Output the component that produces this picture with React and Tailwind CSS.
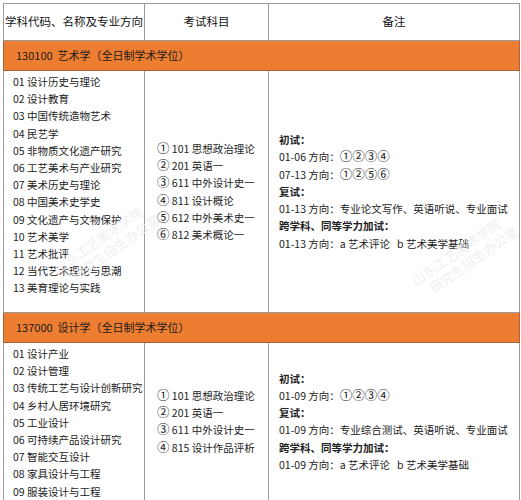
import React from "react";

const font = { fontFamily: '"Noto Sans CJK SC", "Liberation Sans", sans-serif' };

const sections = [
  {
    title: "130100\u00a0 艺术学（全日制学术学位）",
    h: "h-[242px]",
    majors: [
      "01 设计历史与理论",
      "02 设计教育",
      "03 中国传统造物艺术",
      "04 民艺学",
      "05 非物质文化遗产研究",
      "06 工艺美术与产业研究",
      "07 美术历史与理论",
      "08 中国美术史学史",
      "09 文化遗产与文物保护",
      "10 艺术美学",
      "11 艺术批评",
      "12 当代艺术理论与思潮",
      "13 美育理论与实践",
    ],
    exams: [
      "① 101 思想政治理论",
      "② 201 英语一",
      "③ 611 中外设计史一",
      "④ 811 设计概论",
      "⑤ 612 中外美术史一",
      "⑥ 812 美术概论一",
    ],
    notes: [
      { b: true, t: "初试：" },
      { t: "01-06 方向：①②③④" },
      { t: "07-13 方向：①②⑤⑥" },
      { b: true, t: "复试：" },
      { t: "01-13 方向：专业论文写作、英语听说、专业面试" },
      { b: true, t: "跨学科、同等学力加试：" },
      { t: "01-13 方向：a 艺术评论\u00a0\u00a0 b 艺术美学基础" },
    ],
  },
  {
    title: "137000\u00a0 设计学（全日制学术学位）",
    h: "h-[156px]",
    majors: [
      "01 设计产业",
      "02 设计管理",
      "03 传统工艺与设计创新研究",
      "04 乡村人居环境研究",
      "05 工业设计",
      "06 可持续产品设计研究",
      "07 智能交互设计",
      "08 家具设计与工程",
      "09 服装设计与工程",
    ],
    exams: [
      "① 101 思想政治理论",
      "② 201 英语一",
      "③ 611 中外设计史一",
      "④ 815 设计作品评析",
    ],
    notes: [
      { b: true, t: "初试：" },
      { t: "01-09 方向：①②③④" },
      { b: true, t: "复试：" },
      { t: "01-09 方向：专业综合测试、英语听说、专业面试" },
      { b: true, t: "跨学科、同等学力加试：" },
      { t: "01-09 方向：a 艺术评论\u00a0\u00a0 b 艺术美学基础" },
    ],
  },
];

// circled numbers render small in the CJK font, so bump them up a bit
const Circled = ({ text }) =>
  text.split(/([①-⑥])/).map((part, i) =>
    /[①-⑥]/.test(part) ? (
      <span key={i} className="text-[12.5px] leading-none">
        {part}
      </span>
    ) : (
      part
    )
  );

const Watermark = ({ className }) => (
  <div
    className={`absolute pointer-events-none whitespace-nowrap text-[#efefef] text-[13px] leading-[16px] -rotate-[35deg] ${className}`}
    style={font}
  >
    <div>山东工艺美术学院</div>
    <div className="pl-[10px]">研究生招生办公室</div>
  </div>
);

export default function App() {
  return (
    <div className="relative w-[521px] h-[500px] bg-white overflow-hidden pl-[3px] pt-[3px]" style={font}>
      <table className="border-collapse table-fixed w-[516px] text-[#222]">
        <colgroup>
          <col className="w-[141px]" />
          <col className="w-[124px]" />
          <col className="w-[251px]" />
        </colgroup>
        <thead>
          <tr className="h-[37px] text-[11.5px] text-[#111]">
            <th className="border border-[#9a9a9a] font-normal p-0 whitespace-nowrap">学科代码、名称及专业方向</th>
            <th className="border border-[#9a9a9a] font-normal p-0">考试科目</th>
            <th className="border border-[#9a9a9a] font-normal p-0">备注</th>
          </tr>
        </thead>
        <tbody>
          {sections.map((s) => (
            <React.Fragment key={s.title}>
              <tr className="h-[30px]">
                <td
                  colSpan={3}
                  className="border border-[#a8643a] bg-[#ed7d31] text-[11px] text-[#1a1a1a] pl-[12px] p-0"
                >
                  {s.title}
                </td>
              </tr>
              <tr className={`${s.h} text-[10.5px] leading-[17.2px]`}>
                <td className="border border-[#9a9a9a] align-top pl-[9px] pt-[2px] p-0 whitespace-nowrap">
                  {s.majors.map((m) => (
                    <div key={m}>{m}</div>
                  ))}
                </td>
                <td className="border border-[#9a9a9a] align-middle pl-[12px] p-0 whitespace-nowrap">
                  {s.exams.map((e) => (
                    <div key={e}>
                      <Circled text={e} />
                    </div>
                  ))}
                </td>
                <td className="border border-[#9a9a9a] align-middle pl-[10px] p-0 whitespace-nowrap">
                  {s.notes.map((n) => (
                    <div key={n.t} className={n.b ? "font-bold" : ""}>
                      <Circled text={n.t} />
                    </div>
                  ))}
                </td>
              </tr>
            </React.Fragment>
          ))}
        </tbody>
      </table>
      <Watermark className="left-[50px] top-[228px]" />
      <Watermark className="left-[408px] top-[240px]" />
    </div>
  );
}
